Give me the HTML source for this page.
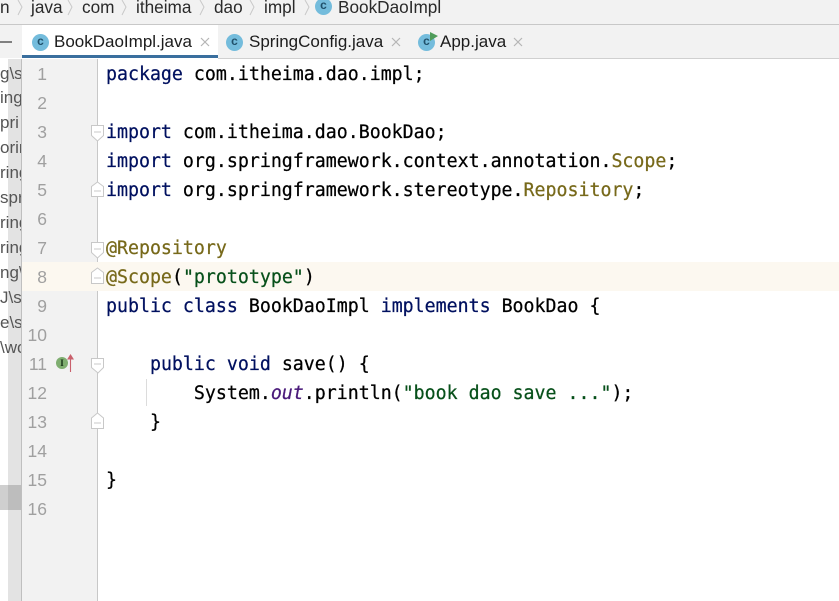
<!DOCTYPE html>
<html><head><meta charset="utf-8"><style>
html,body{margin:0;padding:0;background:#fff}
#r{position:relative;width:839px;height:601px;overflow:hidden;background:#fff;filter:blur(.3px)}
.a{position:absolute}
.b{position:absolute;font:17.2px/20px "Liberation Sans",sans-serif;color:#2a2a2a;white-space:nowrap;top:-3px}
.t{position:absolute;font:17px/20px "Liberation Sans",sans-serif;color:#1c1c1c;white-space:nowrap;top:32px}
.x{position:absolute;top:37px;width:11px;height:11px}
.ic{position:absolute;width:17px;height:17px;border-radius:50%;background:#74bcdc;color:#20506a;font:bold 12px/15px "Liberation Sans",sans-serif;text-align:center}
.side{position:absolute;left:0;width:21px;overflow:hidden;font:17px/20px "Liberation Sans",sans-serif;color:#555;white-space:nowrap}
.n{position:absolute;left:17px;width:30px;text-align:right;font:17.5px/20px "Liberation Sans",sans-serif;color:#a0a0a0}
.c{position:absolute;left:106px;font:18.25px/29px "DejaVu Sans Mono",monospace;color:#000;white-space:pre;-webkit-text-stroke:.25px currentColor}
.k{color:#00105f}.y{color:#77691a}.g{color:#07501a}
</style></head><body><div id="r">
<div class="a" style="left:0;top:0;width:839px;height:24px;background:#f2f2f2"></div>
<div class="a" style="left:0;top:24px;width:839px;height:1px;background:#c8c8c8"></div>
<div class="b" style="left:0">n</div>
<div class="b" style="left:31px">java</div>
<div class="b" style="left:82px">com</div>
<div class="b" style="left:136px">itheima</div>
<div class="b" style="left:214px">dao</div>
<div class="b" style="left:264px">impl</div>
<div class="b" style="left:338px">BookDaoImpl</div>
<svg class="a" style="left:0;top:0" width="340" height="20" fill="none" stroke="#c9c9c9"><path d="M18 0l4 7-4 8M68 0l4 7-4 8M122 0l4 7-4 8M200 0l4 7-4 8M250 0l4 7-4 8M305 0l4 7-4 8"/></svg>
<div class="ic" style="left:315px;top:-2px">c</div>

<div class="a" style="left:0;top:25px;width:839px;height:33px;background:#f2f2f2"></div>
<div class="a" style="left:0;top:41px;width:12px;height:2px;background:#808080"></div>
<div class="a" style="left:22px;top:25px;width:196px;height:30px;background:#fff"></div>
<div class="a" style="left:22px;top:55px;width:196px;height:3px;background:#3a6f9e"></div>
<div class="a" style="left:218px;top:58px;width:621px;height:1px;background:#d0d0d0"></div>
<div class="ic" style="left:32px;top:34px">c</div>
<div class="t" style="left:54px">BookDaoImpl.java</div>
<svg class="x" style="left:200px" fill="none" stroke="#b5b5b5" stroke-width="1.2"><path d="M1 1l8 8M9 1l-8 8"/></svg>
<div class="ic" style="left:226px;top:34px">c</div>
<div class="t" style="left:249px">SpringConfig.java</div>
<svg class="x" style="left:391px" fill="none" stroke="#b5b5b5" stroke-width="1.2"><path d="M1 1l8 8M9 1l-8 8"/></svg>
<div class="ic" style="left:418px;top:34px">c</div>
<svg class="a" style="left:428px;top:31px" width="12" height="12"><path d="M2 1l8 4-8 5z" fill="#4f9c5a"/></svg>
<div class="t" style="left:440px">App.java</div>
<svg class="x" style="left:513px" fill="none" stroke="#b5b5b5" stroke-width="1.2"><path d="M1 1l8 8M9 1l-8 8"/></svg>

<div class="a" style="left:8px;top:59px;width:13px;height:542px;background:#e3e3e3"></div>
<div class="a" style="left:0;top:485px;width:21px;height:25px;background:#cfcfcf"></div>
<div class="a" style="left:8px;top:485px;width:13px;height:25px;background:#bdbdbd"></div>
<div class="a" style="left:21px;top:59px;width:1px;height:542px;background:#bfbfbf"></div>
<div class="a" style="left:22px;top:59px;width:75px;height:542px;background:#f2f2f2"></div>
<div class="a" style="left:97px;top:59px;width:1px;height:542px;background:#c8c8c8"></div>
<div class="a" style="left:22px;top:262px;width:817px;height:29px;background:#fcf8f0"></div>

<div class="side" style="top:64px">g\s</div>
<div class="side" style="top:88px">ing</div>
<div class="side" style="top:113px">pri</div>
<div class="side" style="top:138px">orin</div>
<div class="side" style="top:163px">ring</div>
<div class="side" style="top:188px">spr</div>
<div class="side" style="top:213px">ring</div>
<div class="side" style="top:238px">ring</div>
<div class="side" style="top:263px">ng\</div>
<div class="side" style="top:288px">J\sp</div>
<div class="side" style="top:313px">e\s</div>
<div class="side" style="top:338px">\wo</div>

<div class="n" style="top:64px">1</div><div class="n" style="top:93px">2</div><div class="n" style="top:122px">3</div><div class="n" style="top:151px">4</div><div class="n" style="top:180px">5</div><div class="n" style="top:209px">6</div><div class="n" style="top:238px">7</div><div class="n" style="top:267px">8</div><div class="n" style="top:296px">9</div><div class="n" style="top:325px">10</div><div class="n" style="top:354px">11</div><div class="n" style="top:383px">12</div><div class="n" style="top:412px">13</div><div class="n" style="top:441px">14</div><div class="n" style="top:470px">15</div><div class="n" style="top:499px">16</div>

<div class="a" style="left:56px;top:357px;width:12px;height:12px;border-radius:50%;background:#7fae70;color:#142f14;font:bold 9px/12px 'Liberation Serif',serif;text-align:center">I</div>
<svg class="a" style="left:65px;top:353px" width="11" height="20" fill="none" stroke="#c9606c" stroke-width="1.1"><path d="M5.500 19V2"/><path d="M3 6l2.500-4L8 6z" fill="#c9606c"/></svg>

<svg class="a" style="left:90px;top:120px" width="15" height="320" fill="#fff" stroke="#c8c8c8"><path d="M1.500 5.500h12v10l-6 5.500-6-5.500z"/><path d="M4 12h7"/><path d="M7.500 62l6 4.500v10h-12v-10z"/><path d="M4 71h7"/><path d="M1.500 122.500h12v10l-6 5.500-6-5.500z"/><path d="M4 129h7"/><path d="M7.500 148l6 4.500v11h-12v-11z"/><path d="M4 158h7"/><path d="M1.500 238.500h12v9l-5.500 5.500-6.500-5.500z"/><path d="M4 244h7"/><path d="M7.500 293l6 5v10.500h-12V298z"/><path d="M4 303h7"/></svg>
<div class="a" style="left:146px;top:379px;width:1px;height:27px;background:#dcdcdc"></div>

<div class="c" style="top:60px"><span class="k">package</span> com.itheima.dao.impl;</div>
<div class="c" style="top:118px"><span class="k">import</span> com.itheima.dao.BookDao;</div>
<div class="c" style="top:147px"><span class="k">import</span> org.springframework.context.annotation.<span class="y">Scope</span>;</div>
<div class="c" style="top:176px"><span class="k">import</span> org.springframework.stereotype.<span class="y">Repository</span>;</div>
<div class="c" style="top:234px"><span class="y">@Repository</span></div>
<div class="c" style="top:263px"><span class="y">@Scope</span>(<span class="g">"prototype"</span>)</div>
<div class="c" style="top:292px"><span class="k">public class</span> BookDaoImpl <span class="k">implements</span> BookDao {</div>
<div class="c" style="top:350px">    <span class="k">public void</span> save() {</div>
<div class="c" style="top:379px">        System.<i style="color:#4a1a7a">out</i>.println(<span class="g">"book dao save ..."</span>);</div>
<div class="c" style="top:408px">    }</div>
<div class="c" style="top:466px">}</div>
</div></body></html>
